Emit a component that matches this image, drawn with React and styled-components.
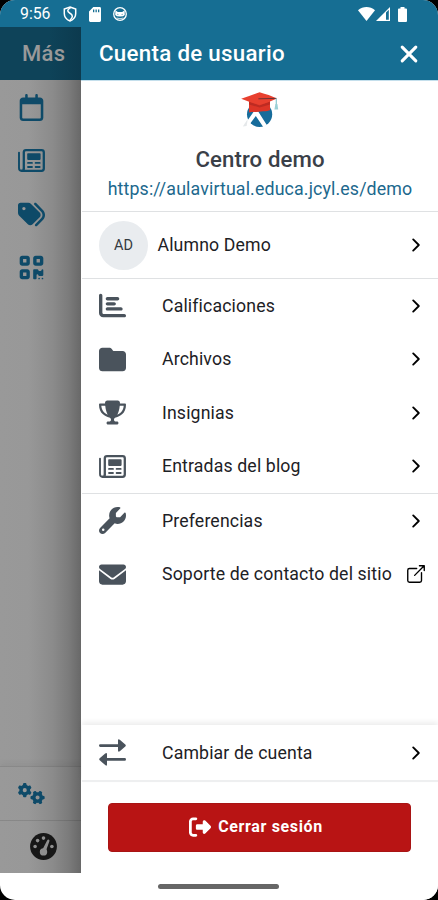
import React from 'react';
import styled, { createGlobalStyle, css } from 'styled-components';

import {
    FaRegCalendar,
    FaTags,
    FaQrcode,
    FaGears,
    FaChartBar,
    FaFolder,
    FaTrophy,
    FaWrench,
    FaEnvelope,
    FaRightFromBracket,
} from 'react-icons/fa6';
import { IoChevronForward, IoOpenOutline } from 'react-icons/io5';


const GlobalStyle = createGlobalStyle`
    * {
        box-sizing: border-box;
    }

    body {
        margin: 0;
        background: #000;
        font-family: Roboto, sans-serif;
    }
`;

const Screen = styled.div`
    display: flex;
    flex-direction: column;
    width: 438px;
    height: 900px;
    overflow: hidden;
    background: #fff;
    border-radius: 15px;
`;

const StatusBar = styled.div`
    display: flex;
    align-items: center;
    flex: none;
    height: 27px;
    padding: 1px 31px 0 20px;
    background: #166e93;
    color: #fff;

    svg {
        display: block;
        flex: none;
    }
`;

const Clock = styled.span`
    width: 42.5px;
    font-size: 15.8px;
    line-height: 20px;
`;

const StatusIcons = styled.div`
    display: flex;
    align-items: center;
    gap: ${({ $gap }) => $gap}px;
    margin-left: ${({ $right }) => ($right ? 'auto' : 0)};
`;

const Body = styled.div`
    display: flex;
    flex: 1;
    min-height: 0;
`;

/* page behind the modal, dimmed by the backdrop */
const Rail = styled.aside`
    display: flex;
    flex-direction: column;
    flex: none;
    width: 81px;
    height: 846px;
    background: linear-gradient(90deg, #999 0, #989898 35%, #8b8b8b 65%, #7b7b7b 85%, #686868 100%);
    color: #0e4a68;
`;

const RailTitle = styled.div`
    flex: none;
    height: 53px;
    margin-bottom: 0.4px;
    padding-left: 22px;
    background: linear-gradient(90deg, #0e4359 60%, #0c3a4e 100%);
    color: #999;
    font-size: 22px;
    font-weight: 500;
    letter-spacing: 0.35px;
    line-height: 53px;
`;

const RailItem = styled.div`
    display: flex;
    align-items: center;
    justify-content: center;
    flex: none;
    width: 63px;
    height: 53.5px;

    svg {
        display: block;
        font-size: 27px;
    }
`;

const RailFooter = styled.div`
    display: flex;
    align-items: center;
    flex: none;
    height: 53.5px;
    padding-left: ${({ $tab }) => ($tab ? 30 : 17.5)}px;
    border-top: 1px solid rgba(0, 0, 0, 0.1);
    color: ${({ $tab }) => ($tab ? '#171717' : '#0e4a68')};
    font-size: 27px;

    ${({ $first }) => $first && css`
        margin-top: auto;
        box-shadow: 0 -3px 6px rgba(0, 0, 0, 0.05);
    `}
`;

const Panel = styled.main`
    display: flex;
    flex-direction: column;
    flex: 1;
    min-width: 0;
    border-left: 1px solid #fff;
    background: #fff;
`;

const Header = styled.header`
    display: flex;
    align-items: center;
    justify-content: space-between;
    flex: none;
    height: 54px;
    margin-left: -1px;
    padding: 0 20px 0 18px;
    border-bottom: 1px solid #c4dfec;
    background: #166e93;
    color: #fff;
`;

const Title = styled.h1`
    margin: 0;
    font-size: 22.3px;
    font-weight: 500;
    letter-spacing: 0.3px;
    line-height: 53px;
`;

const Site = styled.section`
    display: flex;
    flex-direction: column;
    align-items: center;
    flex: none;
    height: 131px;
    padding-top: 8px;
    border-bottom: 1px solid #dfe1e3;
`;

const SiteName = styled.h2`
    margin: 16px 0 0;
    color: #3a4048;
    font-size: 22.2px;
    font-weight: 500;
    letter-spacing: 0.1px;
    line-height: 28px;
`;

const SiteUrl = styled.a`
    margin-top: 4px;
    color: #20688d;
    font-size: 17.8px;
    font-weight: 365;
    letter-spacing: 0.13px;
    line-height: 24px;
`;

const List = styled.div`
    flex: none;
    border-bottom: ${({ $last }) => ($last ? 'none' : '1px solid #dfe1e3')};
`;

const Row = styled.div`
    display: flex;
    align-items: center;
    height: ${({ $height }) => $height || 53.5}px;
    padding: 0 12px 0 17px;
    color: #1d2125;
    font-size: 17.7px;
    font-weight: 365;
    letter-spacing: 0.14px;
`;

const RowIcon = styled.span`
    display: flex;
    flex: none;
    width: 63px;
    color: #4a535c;
    font-size: 27px;
`;

const Avatar = styled.span`
    display: flex;
    align-items: center;
    justify-content: center;
    flex: none;
    width: 49px;
    height: 49px;
    margin-right: 9.5px;
    border-radius: 50%;
    background: #e9ecef;
    color: #343a40;
    font-size: 14.5px;
    letter-spacing: 0;
`;

const Label = styled.span`
    flex: 1;
    line-height: 20px;
    white-space: nowrap;
`;

const UserName = styled(Label)`
    padding-bottom: 1px;
`;

const Detail = styled.span`
    display: flex;
    justify-content: center;
    flex: none;
    width: 20px;
    color: #000;
    font-size: ${({ $external }) => ($external ? 22 : 20)}px;

    svg {
        flex: none;
    }
`;

const AccountBar = styled.div`
    flex: none;
    margin-top: auto;
    padding-top: 1px;
    border-bottom: 2px solid #eeeff0;
    box-shadow: 0 -3px 5px rgba(0, 0, 0, 0.07);
`;

const LogoutArea = styled.div`
    flex: none;
    height: 90.5px;
    padding: 21.5px 27px 0 26px;
`;

const LogoutButton = styled.button`
    display: flex;
    align-items: center;
    justify-content: center;
    gap: 7px;
    width: 100%;
    height: 49px;
    padding: 0 7px 2px 0;
    border: 1px solid #a81414;
    border-radius: 4px;
    background: #b81414;
    color: #fff;
    font-family: inherit;
    font-size: 16px;
    font-weight: 700;
    letter-spacing: 0.65px;

    svg {
        font-size: 22px;
    }
`;

const GestureArea = styled.div`
    display: flex;
    justify-content: center;
    flex: none;
    height: 28px;
    /* the handle is centred on the device, not on the panel */
    margin-left: -83px;
    padding-top: 12px;
`;

const Handle = styled.div`
    width: 121px;
    height: 5px;
    border-radius: 3px;
    background: #666;
`;


function ShieldIcon() {
    return (
        <svg width="14" height="16" viewBox="0 0 14 16" fill="none" stroke="#fff" strokeWidth="1.5">
            <path d="M7 1 L12.7 3 V7.5 C12.7 11.2 10.2 13.8 7 15 C3.8 13.8 1.3 11.2 1.3 7.5 V3 Z" />
            <path d="M7.6 1.6 C4.2 3.6 3.8 5.4 6.6 7 C10.2 9 10.2 11.4 7 14.2" />
        </svg>
    );
}

function SdCardIcon() {
    return (
        <svg width="12" height="15" viewBox="0 0 12 15">
            <path fill="#fff" fillRule="evenodd" d="M4.3 0 H10.6 Q12 0 12 1.4 V13.6 Q12 15 10.6 15 H1.4 Q0 15 0 13.6 V4.5 Z M4 2.4 V5.2 H5.3 V2.4 Z M6.5 2.4 V5.2 H7.8 V2.4 Z M9 2.4 V5.2 H10.3 V2.4 Z" />
        </svg>
    );
}

function FaceIcon() {
    return (
        <svg width="14" height="14" viewBox="0 0 14 14">
            <circle cx="7" cy="7" r="6.3" fill="none" stroke="#fff" strokeWidth="1.3" />
            <path fill="#fff" d="M2.4 3.2 L4.8 5 H9.2 L11.6 3.2 L11.8 8 Q10.8 9.6 7 9.6 Q3.2 9.6 2.2 8 Z" />
            <path fill="none" stroke="#fff" strokeWidth="0.8" d="M3.6 11 Q7 12.4 10.4 11" />
            <circle cx="4.9" cy="7.2" r="0.5" fill="#166e93" />
            <circle cx="9.1" cy="7.2" r="0.5" fill="#166e93" />
        </svg>
    );
}

function WifiIcon() {
    return (
        <svg width="17" height="14" viewBox="0 0 17 14">
            <path fill="#fff" d="M0 3.2 C5 -1 12 -1 17 3.2 L8.5 14 Z" />
        </svg>
    );
}

function SignalIcon() {
    return (
        <svg width="14" height="14" viewBox="0 0 14 14">
            <path fill="#fff" d="M14 0 V14 H0 Z" />
            <path fill="#166e93" d="M10 5.4 L12.8 2.7 V12.8 H10 Z" />
        </svg>
    );
}

function BatteryIcon() {
    return (
        <svg width="9" height="15" viewBox="0 0 9 15">
            <path fill="#fff" d="M2.5 0 H6.5 V1.6 H8 Q9 1.6 9 2.6 V14 Q9 15 8 15 H1 Q0 15 0 14 V2.6 Q0 1.6 1 1.6 H2.5 Z" />
        </svg>
    );
}

function CloseIcon() {
    return (
        <svg width="18" height="18" viewBox="0 0 18 18" fill="none" stroke="#fff" strokeWidth="3.1" strokeLinecap="round">
            <path d="M2.2 2.2 L15.8 15.8 M15.8 2.2 L2.2 15.8" />
        </svg>
    );
}

function NewspaperIcon() {
    return (
        <svg width="27" height="27" viewBox="0 0 27 27" fill="none" stroke="currentColor" strokeLinecap="round">
            <path strokeWidth="2.3" d="M5.8 21.8 V5.3 Q5.8 3.1 8 3.1 H23.6 Q25.8 3.1 25.8 5.3 V21.6 Q25.8 23.8 23.6 23.8 H3.6" />
            <path strokeWidth="1.9" d="M1 5.6 V21 Q1 23.8 3.5 23.8 Q5.8 23.8 5.8 21.4" />
            <rect x="9.2" y="6.3" width="13.4" height="6.6" rx="0.8" fill="currentColor" stroke="none" />
            <path strokeWidth="1.8" d="M10 15.9 H14 M17.6 15.9 H21.7 M10 20 H14 M17.6 20 H21.7" />
        </svg>
    );
}

function GaugeIcon() {
    return (
        <svg width="27" height="27" viewBox="-13.5 -13.5 27 27">
            <circle r="13.4" fill="currentColor" />
            <g fill="#8f8f8f">
                <circle cx="-8.4" cy="0" r="1.8" />
                <circle cx="-5.9" cy="-5.9" r="1.8" />
                <circle cx="0" cy="-8.4" r="1.8" />
                <circle cx="8.4" cy="0" r="1.8" />
                <circle cx="0" cy="5.4" r="3.7" />
                <path d="M3.6 -6 Q4.4 -7.4 5.4 -6.8 Q6.4 -6.2 5.8 -5 L2.6 4 L-1 3 Z" />
            </g>
        </svg>
    );
}

function SwapIcon() {
    return (
        <svg width="27" height="27" viewBox="0 0 27 27" fill="currentColor">
            <path d="M1.3 5.3 H19 V1.4 Q19 -0.6 20.8 0.7 L26.3 5.5 Q27.3 6.5 26.3 7.5 L20.8 12.3 Q19 13.5 19 11.6 V7.9 H1.3 A1.3 1.3 0 0 1 1.3 5.3 Z" />
            <path d="M25.7 19.1 H8 V15.2 Q8 13.2 6.2 14.5 L0.7 19.3 Q-0.3 20.3 0.7 21.3 L6.2 26.1 Q8 27.6 8 25.6 V21.7 H25.7 A1.3 1.3 0 0 0 25.7 19.1 Z" />
        </svg>
    );
}

function SiteLogo() {
    return (
        <svg width="42" height="40" viewBox="0 0 42 40">
            <circle cx="20.6" cy="25.3" r="12.6" fill="#176c9b" />
            <path fill="#fff" d="M14.8 22.4 H19.2 L27.8 36 L24.6 38.6 L16.8 27 L9 37.6 L3.6 38.6 Z" />
            <path fill="#e5e8ea" d="M3.8 37.4 L8.8 30 L7.6 37 Z" />
            <path fill="#dc3527" d="M10 11 H31 V21.2 C28 22.6 13 22.8 10 23.6 Z" />
            <path fill="#bd2b22" d="M10 12.6 L20.6 16.4 L31 12.6 V15.4 L20.6 18.4 L10 15.4 Z" />
            <path fill="#e8402f" d="M2.2 9.8 C8 7.6 14 5.6 20.6 3.3 C27 5.2 32.6 7 38 9.4 C32.6 11.8 27 14.2 20.6 15.9 C14 14.2 8 12 2.2 9.8 Z" />
            <path fill="none" stroke="#5d3034" strokeWidth="0.9" d="M19.4 9.8 L37.4 9.4" />
            <path fill="none" stroke="#8cc8cf" strokeWidth="1.2" d="M37.3 9.4 V15.4" />
            <path fill="#9ad0d6" d="M36.4 15 H38.4 L39.2 20.4 H35.4 Z" />
        </svg>
    );
}


const railIcons = [FaRegCalendar, NewspaperIcon, FaTags, FaQrcode];

const userItems = [
    { icon: FaChartBar, label: 'Calificaciones' },
    { icon: FaFolder, label: 'Archivos' },
    { icon: FaTrophy, label: 'Insignias' },
    { icon: NewspaperIcon, label: 'Entradas del blog' },
];

const appItems = [
    { icon: FaWrench, label: 'Preferencias' },
    { icon: FaEnvelope, label: 'Soporte de contacto del sitio', external: true },
];


function MenuRow({ icon: Icon, label, external }) {
    return (
        <Row>
            <RowIcon><Icon /></RowIcon>
            <Label>{label}</Label>
            <Detail $external={external}>{external ? <IoOpenOutline /> : <IoChevronForward />}</Detail>
        </Row>
    );
}

export default function App() {
    return (
        <Screen>
            <GlobalStyle />
            <StatusBar>
                <Clock>9:56</Clock>
                <StatusIcons $gap={12}>
                    <ShieldIcon />
                    <SdCardIcon />
                    <FaceIcon />
                </StatusIcons>
                <StatusIcons $gap={8} $right>
                    <StatusIcons $gap={1.5}>
                        <WifiIcon />
                        <SignalIcon />
                    </StatusIcons>
                    <BatteryIcon />
                </StatusIcons>
            </StatusBar>
            <Body>
                <Rail>
                    <RailTitle>Más</RailTitle>
                    {railIcons.map((Icon, i) => <RailItem key={i}><Icon /></RailItem>)}
                    <RailFooter $first><FaGears /></RailFooter>
                    <RailFooter $tab><GaugeIcon /></RailFooter>
                </Rail>
                <Panel>
                    <Header>
                        <Title>Cuenta de usuario</Title>
                        <CloseIcon />
                    </Header>
                    <Site>
                        <SiteLogo />
                        <SiteName>Centro demo</SiteName>
                        <SiteUrl>https://aulavirtual.educa.jcyl.es/demo</SiteUrl>
                    </Site>
                    <List>
                        <Row $height={66}>
                            <Avatar>AD</Avatar>
                            <UserName>Alumno Demo</UserName>
                            <Detail><IoChevronForward /></Detail>
                        </Row>
                    </List>
                    <List>
                        {userItems.map(item => <MenuRow key={item.label} {...item} />)}
                    </List>
                    <List $last>
                        {appItems.map(item => <MenuRow key={item.label} {...item} />)}
                    </List>
                    <AccountBar>
                        <MenuRow icon={SwapIcon} label="Cambiar de cuenta" />
                    </AccountBar>
                    <LogoutArea>
                        <LogoutButton>
                            <FaRightFromBracket />
                            Cerrar sesión
                        </LogoutButton>
                    </LogoutArea>
                    <GestureArea>
                        <Handle />
                    </GestureArea>
                </Panel>
            </Body>
        </Screen>
    );
}
